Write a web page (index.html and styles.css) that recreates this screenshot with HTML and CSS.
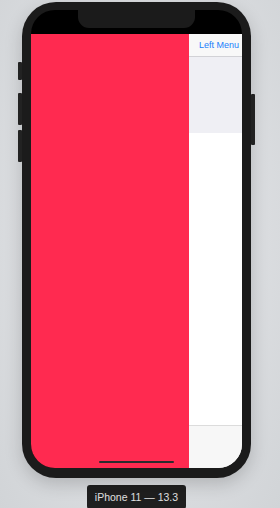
FILE: index.html
```html
<!DOCTYPE html>
<html lang="en">

<head>
    <meta charset="UTF-8">
    <meta name="viewport" content="width=device-width, initial-scale=1.0">
    <title>Simulator</title>
    <link rel="stylesheet" href="styles.css">
</head>

<body>
    <div class="sim">
        <div class="phone">
            <span class="side-btn silent"></span>
            <span class="side-btn vol-up"></span>
            <span class="side-btn vol-down"></span>
            <span class="side-btn power"></span>
            <div class="screen">
                <div class="notch"></div>
                <div class="status-bar"></div>
                <div class="content">
                    <div class="drawer"></div>
                    <div class="main">
                        <div class="nav-bar">
                            <span class="nav-button">Left Menu</span>
                        </div>
                        <div class="header-area"></div>
                        <div class="body-area"></div>
                        <div class="tab-bar"></div>
                    </div>
                </div>
                <div class="home-indicator"></div>
            </div>
        </div>
        <div class="device-label">iPhone 11 — 13.3</div>
    </div>
</body>

</html>
```

FILE: styles.css
```css
* {
    margin: 0;
    padding: 0;
    box-sizing: border-box;
}

body {
    font-family: "Liberation Sans", Arial, sans-serif;
    background: radial-gradient(ellipse at 50% 45%, #e6e8ea 0%, #dcdee1 55%, #d1d4d7 100%);
    height: 508px;
    overflow: hidden;
}

.sim {
    width: 229px;
    margin-left: 22px;
    padding-top: 2px;
    display: flex;
    flex-direction: column;
    align-items: center;
}

.phone {
    position: relative;
    width: 229px;
    height: 476px;
    padding: 8px 9px 10px 9px;
    background-color: #1b1b1b;
    border-radius: 34px;
    box-shadow: 0 6px 18px rgba(0, 0, 0, 0.18);
}

.side-btn {
    position: absolute;
    width: 4px;
    background-color: #222;
    border-radius: 1px;
}

.silent {
    left: -4px;
    top: 60px;
    height: 18px;
}

.vol-up {
    left: -4px;
    top: 91px;
    height: 32px;
}

.vol-down {
    left: -4px;
    top: 128px;
    height: 32px;
}

.power {
    right: -4px;
    top: 92px;
    height: 51px;
}

.screen {
    position: relative;
    width: 211px;
    height: 458px;
    background-color: #000;
    border-radius: 24px;
    overflow: hidden;
    display: flex;
    flex-direction: column;
}

.notch {
    position: absolute;
    top: 0;
    left: 47px;
    width: 117px;
    height: 18px;
    background-color: #1b1b1b;
    border-radius: 0 0 11px 11px;
}

.status-bar {
    height: 24px;
}

.content {
    flex: 1;
    display: flex;
}

.drawer {
    width: 158px;
    background-color: #ff2a50;
}

.main {
    flex: 1;
    display: flex;
    flex-direction: column;
    background-color: #fff;
}

.nav-bar {
    height: 23px;
    background-color: #f8f8f8;
    border-bottom: 1px solid #d2d2d6;
    display: flex;
    align-items: center;
    justify-content: flex-end;
    padding-right: 3px;
    white-space: nowrap;
}

.nav-button {
    font-size: 9px;
    color: #1a7ffb;
}

.header-area {
    height: 76px;
    background-color: #efeff4;
}

.body-area {
    flex: 1;
    background-color: #fff;
}

.tab-bar {
    height: 43px;
    background-color: #f7f7f7;
    border-top: 1px solid #dcdcdc;
}

.home-indicator {
    position: absolute;
    left: 68px;
    bottom: 5px;
    width: 75px;
    height: 2px;
    border-radius: 1px;
    background-color: #2c2c2e;
}

.device-label {
    margin-top: 7px;
    width: 99px;
    height: 24px;
    background-color: #1f1f1f;
    border-radius: 3px;
    color: #e2e2e2;
    font-size: 10.5px;
    display: flex;
    align-items: center;
    justify-content: center;
}
```
